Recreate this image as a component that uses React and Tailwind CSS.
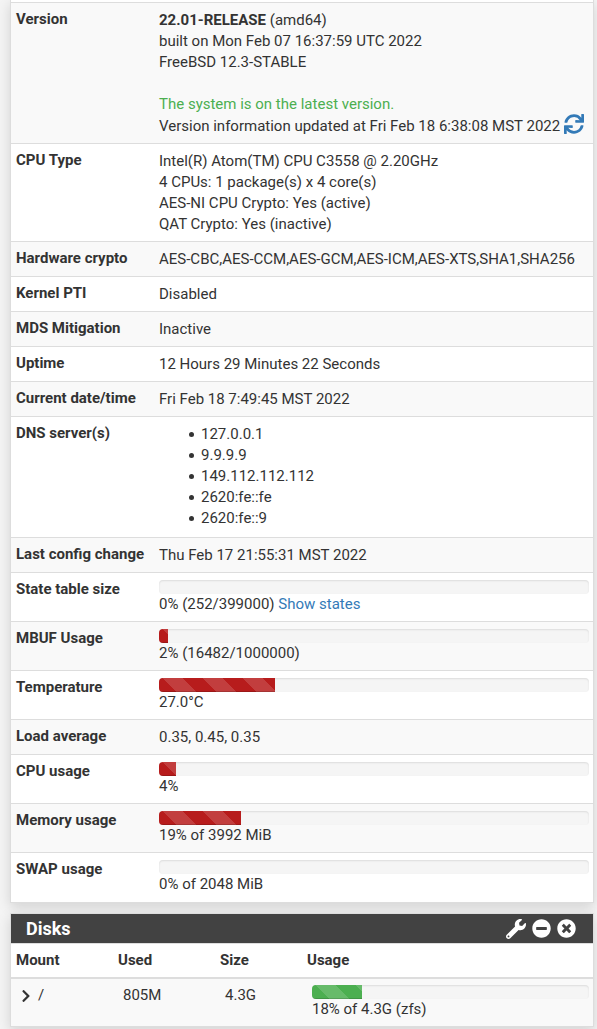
import React from "react";
import { FaSync, FaWrench, FaMinusCircle, FaTimesCircle, FaChevronRight } from "react-icons/fa";

const usage = {
  mbuf: 2,
  temperature: 27,
  cpu: 4,
  memory: 19,
};

const dnsServers = ["127.0.0.1", "9.9.9.9", "149.112.112.112", "2620:fe::fe", "2620:fe::9"];

const Progress = ({ value, label, color = "bg-[#b71c1c]" }) => (
  <div
    role="progressbar"
    aria-label={label}
    aria-valuenow={value}
    aria-valuemin={0}
    aria-valuemax={100}
    className="h-[14px] overflow-hidden rounded bg-[#f5f5f5] shadow-[inset_0_1px_2px_rgba(0,0,0,0.1)]"
  >
    <div
      className={`h-full ${color} bg-[linear-gradient(45deg,rgba(255,255,255,0.15)_25%,transparent_25%,transparent_50%,rgba(255,255,255,0.15)_50%,rgba(255,255,255,0.15)_75%,transparent_75%,transparent)] bg-[length:40px_40px] bg-[position:4px_0] shadow-[inset_0_-1px_0_rgba(0,0,0,0.15)]`}
      style={{ width: `${value}%` }}
    ></div>
  </div>
);

const Row = ({ title, children }) => (
  <tr className="border-t border-[#ddd] odd:bg-[#f9f9f9]">
    <th scope="row" className="w-[143px] pt-[6px] pb-[7px] pl-[5px] text-left align-top font-bold whitespace-nowrap">
      {title}
    </th>
    <td className="pt-[7px] pb-[6px] pl-[5px] pr-1 align-top">{children}</td>
  </tr>
);

const SystemInformation = () => (
  <section className="border-x border-b border-[#ddd] bg-white pt-[2px] pb-px shadow-[0_4px_12px_rgba(0,0,0,0.14)]">
    <table className="w-full border-collapse">
      <tbody>
        <Row title="Version">
          <strong>22.01-RELEASE</strong> (amd64)
          <br />
          built on Mon Feb 07 16:37:59 UTC 2022
          <br />
          FreeBSD 12.3-STABLE
          <br />
          <br />
          <span className="text-[#4caf50]">The system is on the latest version.</span>
          <div className="flex h-[22px] items-center justify-between pr-[5px]">
            <span>Version information updated at Fri Feb 18 6:38:08 MST 2022</span>
            <a href="#refresh" aria-label="Refresh version" className="-mt-1 text-[#337ab7]">
              <FaSync size={20} />
            </a>
          </div>
        </Row>
        <Row title="CPU Type">
          Intel(R) Atom(TM) CPU C3558 @ 2.20GHz
          <br />
          4 CPUs: 1 package(s) x 4 core(s)
          <br />
          AES-NI CPU Crypto: Yes (active)
          <br />
          QAT Crypto: Yes (inactive)
        </Row>
        <Row title="Hardware crypto">AES-CBC,AES-CCM,AES-GCM,AES-ICM,AES-XTS,SHA1,SHA256</Row>
        <Row title="Kernel PTI">Disabled</Row>
        <Row title="MDS Mitigation">Inactive</Row>
        <Row title="Uptime">12 Hours 29 Minutes 22 Seconds</Row>
        <Row title="Current date/time">Fri Feb 18 7:49:45 MST 2022</Row>
        <Row title="DNS server(s)">
          <ul className="pb-[2px] pl-[30px]">
            {dnsServers.map((server) => (
              <li
                key={server}
                className="flex items-center gap-[7px] before:size-[5px] before:rounded-full before:bg-[#333] before:content-['']"
              >
                {server}
              </li>
            ))}
          </ul>
        </Row>
        <Row title="Last config change">Thu Feb 17 21:55:31 MST 2022</Row>
        <Row title="State table size">
          <Progress value={0} label="State table size" />
          0% (252/399000){" "}
          <a href="#states" className="text-[#337ab7]">
            Show states
          </a>
        </Row>
        <Row title="MBUF Usage">
          <Progress value={usage.mbuf} label="MBUF Usage" />
          2% (16482/1000000)
        </Row>
        <Row title="Temperature">
          <Progress value={usage.temperature} label="Temperature" />
          27.0°C
        </Row>
        <Row title="Load average">0.35, 0.45, 0.35</Row>
        <Row title="CPU usage">
          <Progress value={usage.cpu} label="CPU usage" />
          4%
        </Row>
        <Row title="Memory usage">
          <Progress value={usage.memory} label="Memory usage" />
          19% of 3992 MiB
        </Row>
        <Row title="SWAP usage">
          <Progress value={0} label="SWAP usage" />
          0% of 2048 MiB
        </Row>
      </tbody>
    </table>
  </section>
);

const Disks = () => (
  <section className="mt-[10px] border border-[#ddd] bg-white shadow-[0_4px_12px_rgba(0,0,0,0.14)]">
    <div className="flex h-[29px] items-center justify-between bg-[#424242] pr-[17px] pl-[15px] text-white">
      <h2 className="text-[18px] font-bold">Disks</h2>
      <div className="flex items-center gap-[6px]">
        <button type="button" aria-label="Settings">
          <FaWrench size={20} />
        </button>
        <button type="button" aria-label="Collapse">
          <FaMinusCircle size={19} />
        </button>
        <button type="button" aria-label="Close">
          <FaTimesCircle size={19} />
        </button>
      </div>
    </div>
    <table className="w-full table-fixed border-collapse border-t border-[#ddd]">
      <thead>
        <tr className="border-b-2 border-[#ddd] text-left">
          <th className="w-[102px] py-[6px] pl-[5px]">Mount</th>
          <th className="w-[102px] py-[6px] pl-[5px]">Used</th>
          <th className="w-[87px] py-[6px] pl-[5px]">Size</th>
          <th className="py-[6px] pl-[5px]">Usage</th>
        </tr>
      </thead>
      <tbody>
        <tr className="bg-[#f9f9f9] align-top">
          <td className="pt-[6px] pl-[8px]">
            <button type="button" aria-label="Expand /" className="flex items-center gap-[5px]">
              <FaChevronRight size={14} />
              <span>/</span>
            </button>
          </td>
          <td className="pt-[6px] pl-[10px]">805M</td>
          <td className="pt-[6px] pl-[10px]">4.3G</td>
          <td className="pt-[6px] pr-1 pb-[6px] pl-[10px]">
            <Progress value={18} label="Disk usage" color="bg-[#4caf50]" />
            18% of 4.3G (zfs)
          </td>
        </tr>
      </tbody>
    </table>
  </section>
);

export default function App() {
  return (
    <main className="min-h-screen bg-[#f4f4f4] pr-[3px] pl-[10px] font-[Roboto,sans-serif] text-[15px] leading-[21px] text-[#333]">
      <SystemInformation />
      <Disks />
    </main>
  );
}
